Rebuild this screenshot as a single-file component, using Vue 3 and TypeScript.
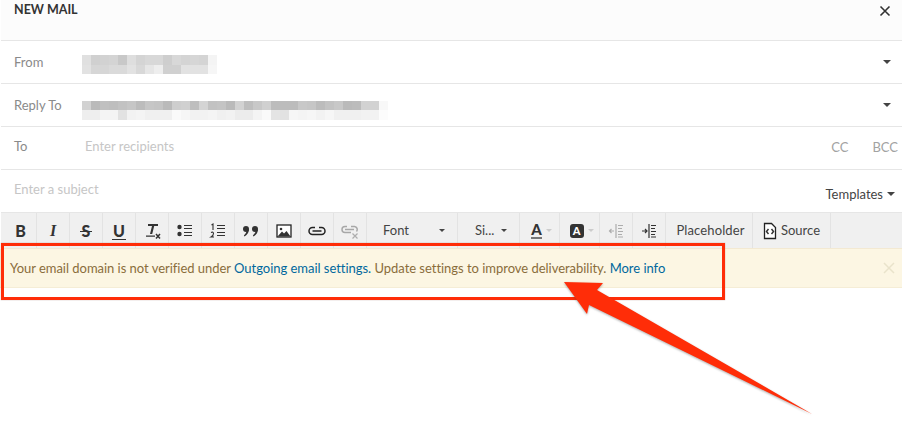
<template>
  <div class="composer">
    <header class="title-row">
      <span class="title">NEW MAIL</span>
      <svg class="close" viewBox="0 0 12 12"><path d="M1.5 1.5 10.5 10.5M10.5 1.5 1.5 10.5" /></svg>
    </header>

    <div class="field">
      <span class="label">From</span>
      <div class="blur from">
        <div v-for="(row, r) in fromBlur" :key="r" class="blur-row">
          <i v-for="(g, c) in row" :key="c" :style="{ background: gray(g) }" />
        </div>
      </div>
      <span class="caret big" />
    </div>
    <div class="field">
      <span class="label">Reply To</span>
      <div class="blur reply">
        <div v-for="(row, r) in replyBlur" :key="r" class="blur-row">
          <i v-for="(g, c) in row" :key="c" :style="{ background: gray(g) }" />
        </div>
      </div>
      <span class="caret big" />
    </div>
    <div class="field to">
      <span class="label">To</span>
      <span class="hint recipients">Enter recipients</span>
      <span class="cc">CC</span>
      <span class="cc bcc">BCC</span>
    </div>
    <div class="field subject">
      <span class="hint">Enter a subject</span>
      <span class="templates">Templates</span>
      <span class="caret big" />
    </div>

    <div class="toolbar">
      <button class="tool first"><b class="glyph">B</b></button>
      <button class="tool"><i class="glyph serif-i">I</i></button>
      <button class="tool"><b class="glyph strike">S</b></button>
      <button class="tool"><b class="glyph under">U</b></button>
      <button class="tool">
        <svg viewBox="0 0 20 20"><path class="ink" d="M6 3h10v2h-3.800l-2 8H8l2-8H6zM4 14.500h9v1.200H4z" /><path class="thin thick" d="M14 13l4 4.500M18 13l-4 4.500" /></svg>
      </button>
      <button class="tool">
        <svg viewBox="0 0 20 20"><circle class="ink" cx="4.500" cy="6" r="2.200" /><circle class="ink" cx="4.500" cy="13" r="2.200" /><path class="thin" d="M9 4.500h8M9 7.500h8M9 11.500h8M9 14.500h8" /></svg>
      </button>
      <button class="tool">
        <svg viewBox="0 0 20 20"><path class="thin" d="M9 4.500h8M9 7.500h8M9 11.500h8M9 14.500h8" /><path class="num" d="M3.500 4 5 3v6M3 11.500q2.500-1 2.500 1T3 16h3" /></svg>
      </button>
      <button class="tool">
        <svg viewBox="0 0 20 20"><circle class="ink" cx="5" cy="8" r="3" /><path class="ink" d="M8 8q0 5-4.500 7.500l-.6-1Q5.500 12.500 5.500 10z" /><circle class="ink" cx="14" cy="8" r="3" /><path class="ink" d="M17 8q0 5-4.500 7.500l-.6-1q2.600-2 2.600-4.500z" /></svg>
      </button>
      <button class="tool">
        <svg viewBox="0 0 20 20"><rect class="frame" x="3" y="4" width="14" height="12" /><circle class="ink" cx="7" cy="8" r="1.300" /><path class="ink" d="M3.500 15.500 8 10.500l2 2 2.500-2.500 4 5.500z" /></svg>
      </button>
      <button class="tool">
        <svg viewBox="0 0 20 20"><path class="link" d="M8 6.500H5.500a3.500 3.500 0 0 0 0 7h9a3.500 3.500 0 0 0 0-7H12M5.500 10h9" /></svg>
      </button>
      <button class="tool muted">
        <svg viewBox="0 0 20 20"><path class="link" d="M7 5.500H5a3 3 0 0 0 0 6h6M11 5.500h3.500a3 3 0 0 1 2 5M5 8.500h9" /><path class="thin" d="M12.500 12.500l5 5M17.500 12.500l-5 5" /></svg>
      </button>
      <button class="tool drop font"><span class="tool-text">Font</span><span class="caret" /></button>
      <button class="tool drop size"><span class="tool-text">Si...</span><span class="caret" /></button>
      <button class="tool color">
        <span class="letter-a">A</span><span class="caret faint" />
      </button>
      <button class="tool color">
        <span class="letter-box">A</span><span class="caret faint" />
      </button>
      <button class="tool muted">
        <svg viewBox="0 0 20 20"><path class="thin" d="M10 3v14M12 4.500h5M12 7.500h4M12 10.500h5M12 13.500h4M12 16h5M3 10h5M5.500 8 3.500 10l2 2" /></svg>
      </button>
      <button class="tool">
        <svg viewBox="0 0 20 20"><path class="thin" d="M10 3v14M12 4.500h5M12 7.500h4M12 10.500h5M12 13.500h4M12 16h5M3 10h5M6 8l2 2-2 2" /></svg>
      </button>
      <button class="tool wide"><span class="tool-text">Placeholder</span></button>
      <button class="tool source">
        <svg viewBox="0 0 20 20"><path class="frame" d="M4.500 2.500h7l4 4v11h-11z" /><path class="thin thick" d="M8.500 8 6.500 10.500 8.500 13M11.500 8l2 2.500-2 2.500" /></svg>
        <span class="tool-text">Source</span>
      </button>
    </div>

    <div class="notice">
      <p>
        Your email domain is not verified under
        <a>Outgoing email settings.</a>
        Update settings to improve deliverability.
        <a>More info</a>
      </p>
      <svg class="notice-close" viewBox="0 0 12 12"><path d="M1 1 11 11M11 1 1 11" /></svg>
    </div>

    <div class="mark-box" />
    <svg class="arrow" viewBox="0 0 902 440">
      <polygon points="564,282 603,283 597,290 812,414 589,305 587,314" />
    </svg>
  </div>
</template>

<script setup lang="ts">
const fromBlur = [
  [224, 208, 210, 212, 200, 222, 212, 216, 216, 206, 216, 212, 214, 212, 244],
  [226, 214, 214, 218, 218, 226, 216, 230, 238, 208, 208, 226, 226, 226, 246],
];
const replyBlur = [
  [
    210, 186, 192, 190, 194, 198, 188, 198, 196, 186, 206, 208, 190, 212, 194, 196, 186, 210, 190, 200, 208, 188, 188,
    188, 200, 198, 188, 195, 200, 186, 188, 210, 210, 248,
  ],
  [
    238, 238, 244, 244, 226, 242, 244, 240, 240, 240, 250, 246, 242, 242, 244, 240, 242, 236, 236, 244, 250, 228, 226,
    246, 244, 246, 242, 246, 240, 240, 240, 242, 242, 252,
  ],
];
// biome-ignore lint/correctness/noUnusedVariables: referenced by the Vue template
const gray = (g: number) => `rgb(${g}, ${g}, ${g})`;
</script>

<style>
html,
body {
  margin: 0;
  background: #fff;
}
</style>

<style scoped>
.composer {
  position: relative;
  width: 902px;
  height: 440px;
  overflow: hidden;
  background: #fff;
  font-family: Lato, "Liberation Sans", sans-serif;
  font-size: 13px;
  color: #8a8a8a;
}

.title-row {
  display: flex;
  justify-content: space-between;
  height: 38px;
  margin-left: 1px;
  padding: 2px 11px 0 13px;
  background: #fcfcfc;
  border-bottom: 1px solid #e6e6e6;
}

.title {
  font-size: 12.500px;
  font-weight: 700;
  color: #333;
  line-height: 16px;
}

.close {
  width: 12px;
  height: 12px;
  margin-top: 3px;
  fill: none;
  stroke: #333;
  stroke-width: 1.600;
}

.field {
  display: flex;
  align-items: center;
  height: 42px;
  margin-left: 1px;
  padding: 0 11px 0 13px;
  border-bottom: 1px solid #e6e6e6;
}

.label {
  width: 68px;
  color: #8a8a8a;
}

.to .label,
.to .hint {
  margin-bottom: 4px;
}

.to .cc {
  margin-bottom: 2px;
}

.blur {
  display: flex;
  flex-direction: column;
  flex: 1;
}

.blur.from {
  margin-top: 5px;
}

.blur.reply {
  margin-top: 10px;
}

.blur-row {
  display: flex;
  height: 9.500px;
}

.blur-row i {
  width: 9px;
}

.caret {
  display: inline-block;
  width: 0;
  height: 0;
  border-left: 3px solid transparent;
  border-right: 3px solid transparent;
  border-top: 3px solid #444;
}

.caret.big {
  border-left-width: 4px;
  border-right-width: 4px;
  border-top-width: 4px;
}

.hint {
  color: #c6c6c6;
}

.recipients {
  flex: 1;
  margin-left: 3px;
}

.cc {
  color: #a2a2a2;
  margin-right: 24px;
}

.cc.bcc {
  margin-right: -7px;
}

.subject {
  padding-right: 7px;
}

.subject .hint {
  flex: 1;
  margin-bottom: 4px;
  margin-top: -1px;
}

.templates {
  margin-right: 4px;
  margin-top: 6px;
  color: #444;
}

.subject .caret {
  margin-top: 6px;
}

.toolbar {
  display: flex;
  height: 35px;
  margin-left: 1px;
  background: #f0f0f0;
  border-bottom: 1px solid #f3e9d2;
}

.tool {
  display: flex;
  align-items: center;
  justify-content: center;
  flex: none;
  width: 33px;
  padding: 0;
  border: 0;
  border-right: 1px solid #e3e3e3;
  background: none;
  font: inherit;
  color: #444;
  box-sizing: border-box;
}

.tool.first {
  width: 36px;
  padding-left: 4px;
}

.tool svg {
  width: 20px;
  height: 20px;
}

.tool-text {
  margin-bottom: 2px;
}

.ink {
  fill: #333;
}

.thin {
  fill: none;
  stroke: #333;
  stroke-width: 1.200;
}

.thick {
  stroke-width: 1.500;
}

.num {
  fill: none;
  stroke: #333;
  stroke-width: 1.100;
}

.frame {
  fill: #fff;
  stroke: #222;
  stroke-width: 1.300;
}

.link {
  fill: none;
  stroke: #222;
  stroke-width: 1.500;
}

.muted svg {
  opacity: 0.35;
}

.glyph {
  position: relative;
  font-family: Lato, sans-serif;
  font-size: 16px;
  font-weight: 900;
  line-height: 16px;
  color: #333;
}

.serif-i {
  font-family: "Liberation Serif", serif;
  font-weight: 700;
}

.strike::after {
  content: "";
  position: absolute;
  left: -2px;
  right: -2px;
  top: 8px;
  height: 1px;
  background: #333;
}

.under::after {
  content: "";
  position: absolute;
  left: -1px;
  right: -1px;
  top: 16px;
  height: 1px;
  background: #333;
}

.tool.drop {
  justify-content: space-between;
}

.tool.font {
  width: 91px;
  padding: 0 12px 0 16px;
}

.tool.size {
  width: 62px;
  padding: 0 12px 0 17px;
}

.tool.color {
  width: 40px;
  gap: 4px;
  padding-left: 4px;
}

.faint {
  border-top-color: #ccc;
}

.letter-a {
  font-size: 15px;
  font-weight: 900;
  line-height: 15px;
  color: #333;
  border-bottom: 2px solid #777;
}

.letter-box {
  display: block;
  width: 14px;
  height: 14px;
  border-radius: 3px;
  background: #333;
  color: #fff;
  font-size: 11px;
  font-weight: 900;
  line-height: 14px;
  text-align: center;
}

.tool.wide {
  width: 87px;
  letter-spacing: 0.12px;
  padding-left: 3px;
}

.tool.source {
  width: 78px;
  gap: 1px;
  padding-right: 3px;
}

.notice {
  display: flex;
  align-items: center;
  justify-content: space-between;
  height: 38px;
  padding: 0 7px 0 10px;
  background: #fcf6e3;
  border-bottom: 1px solid #f5edd6;
  color: #8a6d3b;
}

.notice p {
  margin: 0;
  letter-spacing: -0.03px;
}

.notice a {
  color: #00689d;
}

.notice-close {
  width: 12px;
  height: 12px;
  fill: none;
  stroke: #e9e3cb;
  stroke-width: 1.500;
}

.mark-box {
  position: absolute;
  left: 1px;
  top: 243px;
  width: 718px;
  height: 51px;
  border: 3px solid #ff2d08;
  box-shadow: 0 0 1px rgba(120, 60, 50, 0.5);
}

.arrow {
  position: absolute;
  left: 0;
  top: 0;
  width: 902px;
  height: 440px;
  fill: #ff2d08;
  filter: drop-shadow(0 1px 1px rgba(70, 70, 70, 0.45));
}
</style>
